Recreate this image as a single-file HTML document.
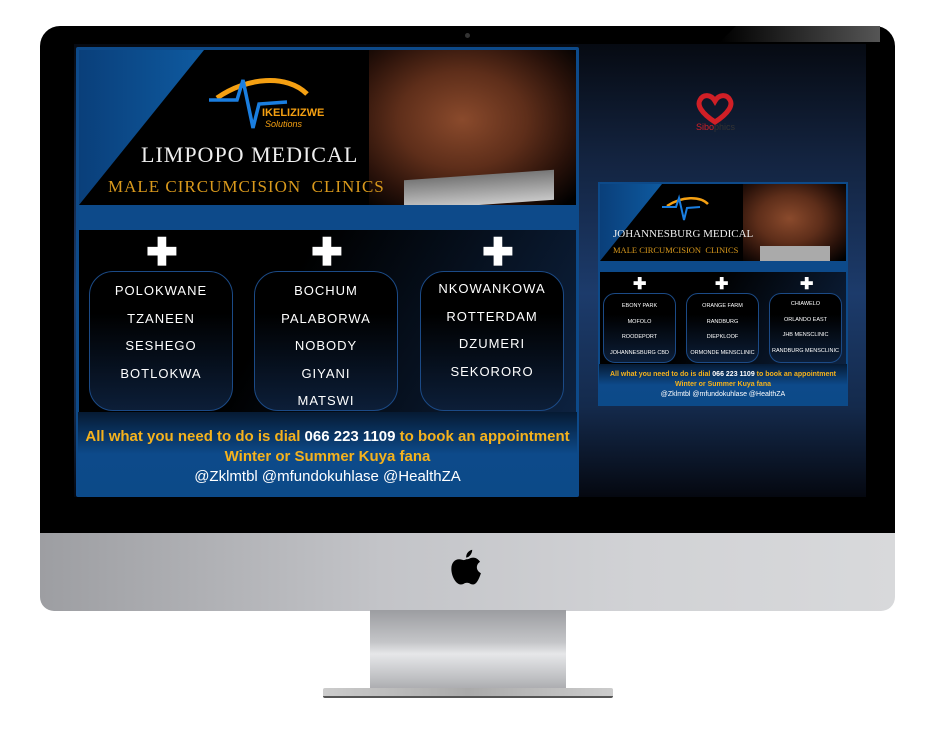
<!DOCTYPE html>
<html><head><style>
*{margin:0;padding:0;box-sizing:border-box}
body{width:934px;height:754px;background:#fff;position:relative;overflow:hidden;font-family:"Liberation Sans",sans-serif}
.a{position:absolute}
.bez{left:40px;top:26px;width:855px;height:508px;background:#000;border-radius:20px 20px 0 0}
.chin{left:40px;top:533px;width:855px;height:78px;border-radius:0 0 14px 14px;background:linear-gradient(90deg,#9d9ea2,#c3c4c8 40%,#d1d2d5 70%,#d8d9db)}
.scr{left:74px;top:44px;width:792px;height:453px;background:linear-gradient(180deg,#060a12 0%,#13233f 25%,#1c3b6b 55%,#142a4c 80%,#050810 100%)}
.pos{left:76px;top:47px;width:503px;height:450px;background:#0d4a8a;border-radius:2px}
.hdr{background:#000;overflow:hidden}
.torso{background:radial-gradient(ellipse at 45% 45%,#8a4a2c 0%,#5e2e1a 40%,#2a120a 70%,#000 95%)}
.serif{font-family:"Liberation Serif",serif}
.box{border:1px solid #1b4a86;border-radius:24px;background:linear-gradient(180deg,#000 30%,#0c1e38);color:#fff;text-align:center;letter-spacing:1px;white-space:nowrap}
.plus{color:#fff;font-weight:bold}
.ft{background:linear-gradient(180deg,#061a33,#0d4a8a 50%,#0c4a88);text-align:center;font-weight:bold;white-space:nowrap}
</style></head><body>
<div class="a bez"></div>
<div class="a" style="left:720px;top:26px;width:160px;height:16px;background:linear-gradient(90deg,#000,#333 60%,#555);clip-path:polygon(10% 0,100% 0,100% 100%,0 100%)"></div>
<div class="a" style="left:465px;top:33px;width:5px;height:5px;border-radius:50%;background:#333"></div>
<div class="a chin"></div>
<svg class="a" style="left:451px;top:548px" width="32" height="40" viewBox="0 0 36 46"><path d="M24 2c0 5-4 9-7 9 0-5 3-8 7-9zM17 13c3 0 5-2 8-2 4 0 7 3 8 5-5 3-5 10 1 13-2 6-5 13-9 13-3 0-4-2-7-2s-4 2-7 2C5 42 0 32 0 24c0-7 4-11 9-11 3 0 5 2 8 0z" fill="#000"/></svg>
<div class="a" style="left:370px;top:610px;width:196px;height:80px;background:linear-gradient(180deg,#9c9da1,#c4c5c8 40%,#e6e7e9 55%,#bfc0c3 85%,#a9aaad);clip-path:polygon(0 0,100% 0,102% 85%,125% 98%,-25% 98%,-2% 85%)"></div>
<div class="a" style="left:323px;top:688px;width:290px;height:10px;background:linear-gradient(90deg,#ccc,#aaa 50%,#ccc);border-radius:2px;border-bottom:2px solid #555"></div>
<div class="a scr"></div>

<!-- main poster -->
<div class="a pos"></div>
<div class="a hdr" style="left:79px;top:50px;width:497px;height:155px">
 <div class="a" style="left:0;top:0;width:125px;height:155px;background:linear-gradient(90deg,#0a3f7a,#0e5aa0);clip-path:polygon(0 0,100% 0,0 100%)"></div>
 <div class="a torso" style="left:290px;top:0;width:207px;height:155px"></div>
 <div class="a" style="left:325px;top:125px;width:150px;height:30px;background:linear-gradient(180deg,#777,#c8c8c8);transform:skewY(-4deg)"></div>
 <svg class="a" style="left:128px;top:22px" width="125" height="60"><path d="M10 26 C40 5 80 2 100 22" stroke="#f5a012" stroke-width="5" fill="none"/><path d="M2 28 H30 L36 8 L46 56 L52 32 L80 30" stroke="#1a7ee0" stroke-width="3.5" fill="none"/><text x="55" y="44" fill="#f5a012" font-size="11" font-weight="bold">IKELIZIZWE</text><text x="58" y="55" fill="#f5a012" font-size="9" font-style="italic">Solutions</text></svg>
 <div class="a serif" style="left:62px;top:92px;color:#eee;font-size:22px;letter-spacing:1px">LIMPOPO MEDICAL</div>
 <div class="a serif" style="left:29px;top:127px;color:#d9991c;font-size:17px;letter-spacing:1px;white-space:pre">MALE CIRCUMCISION  CLINICS</div>
</div>
<div class="a" style="left:79px;top:230px;width:497px;height:182px;background:linear-gradient(120deg,#000 40%,#0d2240)"></div>
<div class="a plus" style="left:146px;top:230px;font-size:38px">✚</div>
<div class="a plus" style="left:311px;top:230px;font-size:38px">✚</div>
<div class="a plus" style="left:482px;top:230px;font-size:38px">✚</div>
<div class="a box" style="left:89px;top:271px;width:144px;height:140px;font-size:13px;line-height:27.5px;padding-top:5px">POLOKWANE<br>TZANEEN<br>SESHEGO<br>BOTLOKWA</div>
<div class="a box" style="left:254px;top:271px;width:144px;height:140px;font-size:13px;line-height:27.5px;padding-top:5px">BOCHUM<br>PALABORWA<br>NOBODY<br>GIYANI<br>MATSWI</div>
<div class="a box" style="left:420px;top:271px;width:144px;height:140px;font-size:13px;line-height:27.5px;padding-top:3px">NKOWANKOWA<br>ROTTERDAM<br>DZUMERI<br>SEKORORO</div>
<div class="a ft" style="left:78px;top:412px;width:499px;height:84px;padding-top:15px;font-size:15px;line-height:20px;color:#f5b21c">All what you need to do is dial <span style="color:#fff">066 223 1109</span> to book an appointment<br>Winter or Summer Kuya fana<br><span style="color:#fff;font-weight:normal">@Zklmtbl @mfundokuhlase @HealthZA</span></div>

<!-- sibo logo -->
<svg class="a" style="left:695px;top:92px" width="42" height="44"><path d="M20 30 C6 21 2 13 5 8 C8 2 16 2 20 9 C24 2 32 2 35 8 C38 13 34 21 20 30Z" fill="none" stroke="#d01f26" stroke-width="5"/><text x="1" y="38" font-size="9" fill="#d01f26">Sibo</text><text x="19" y="38" font-size="9" fill="#333">phics</text></svg>

<!-- small poster -->
<div class="a" style="left:598px;top:182px;width:250px;height:224px;background:#0d4a8a"></div>
<div class="a hdr" style="left:600px;top:184px;width:246px;height:77px">
 <div class="a" style="left:0;top:0;width:62px;height:77px;background:linear-gradient(90deg,#0a3f7a,#0e5aa0);clip-path:polygon(0 0,100% 0,0 100%)"></div>
 <div class="a torso" style="left:143px;top:0;width:103px;height:77px"></div>
 <div class="a" style="left:160px;top:62px;width:70px;height:15px;background:#aaa"></div>
 <svg class="a" style="left:62px;top:10px" width="50" height="28"><path d="M5 12 C20 2 38 2 46 10" stroke="#f5a012" stroke-width="2.5" fill="none"/><path d="M0 13 H14 L17 4 L22 26 L25 14 L38 13" stroke="#1a7ee0" stroke-width="2" fill="none"/></svg>
 <div class="a serif" style="left:13px;top:44px;color:#eee;font-size:11px;white-space:nowrap">JOHANNESBURG MEDICAL</div>
 <div class="a serif" style="left:13px;top:61px;color:#d9991c;font-size:8.5px;white-space:pre">MALE CIRCUMCISION  CLINICS</div>
</div>
<div class="a" style="left:600px;top:272px;width:246px;height:92px;background:linear-gradient(120deg,#000 40%,#0d2240)"></div>
<div class="a plus" style="left:633px;top:274px;font-size:16px">✚</div>
<div class="a plus" style="left:715px;top:274px;font-size:16px">✚</div>
<div class="a plus" style="left:800px;top:274px;font-size:16px">✚</div>
<div class="a box" style="left:603px;top:293px;width:73px;height:70px;font-size:5.5px;line-height:15.5px;padding-top:5px;border-radius:12px;letter-spacing:0">EBONY PARK<br>MOFOLO<br>ROODEPORT<br>JOHANNESBURG CBD</div>
<div class="a box" style="left:686px;top:293px;width:73px;height:70px;font-size:5.5px;line-height:15.5px;padding-top:5px;border-radius:12px;letter-spacing:0">ORANGE FARM<br>RANDBURG<br>DIEPKLOOF<br>ORMONDE MENSCLINIC</div>
<div class="a box" style="left:769px;top:293px;width:73px;height:70px;font-size:5.5px;line-height:15.5px;padding-top:3px;border-radius:12px;letter-spacing:0">CHIAWELO<br>ORLANDO EAST<br>JHB MENSCLINIC<br>RANDBURG MENSCLINIC</div>
<div class="a ft" style="left:599px;top:364px;width:248px;height:42px;padding-top:6px;font-size:7px;line-height:10px;color:#f5b21c">All what you need to do is dial <span style="color:#fff">066 223 1109</span> to book an appointment<br>Winter or Summer Kuya fana<br><span style="color:#fff;font-weight:normal">@Zklmtbl @mfundokuhlase @HealthZA</span></div>
</body></html>
